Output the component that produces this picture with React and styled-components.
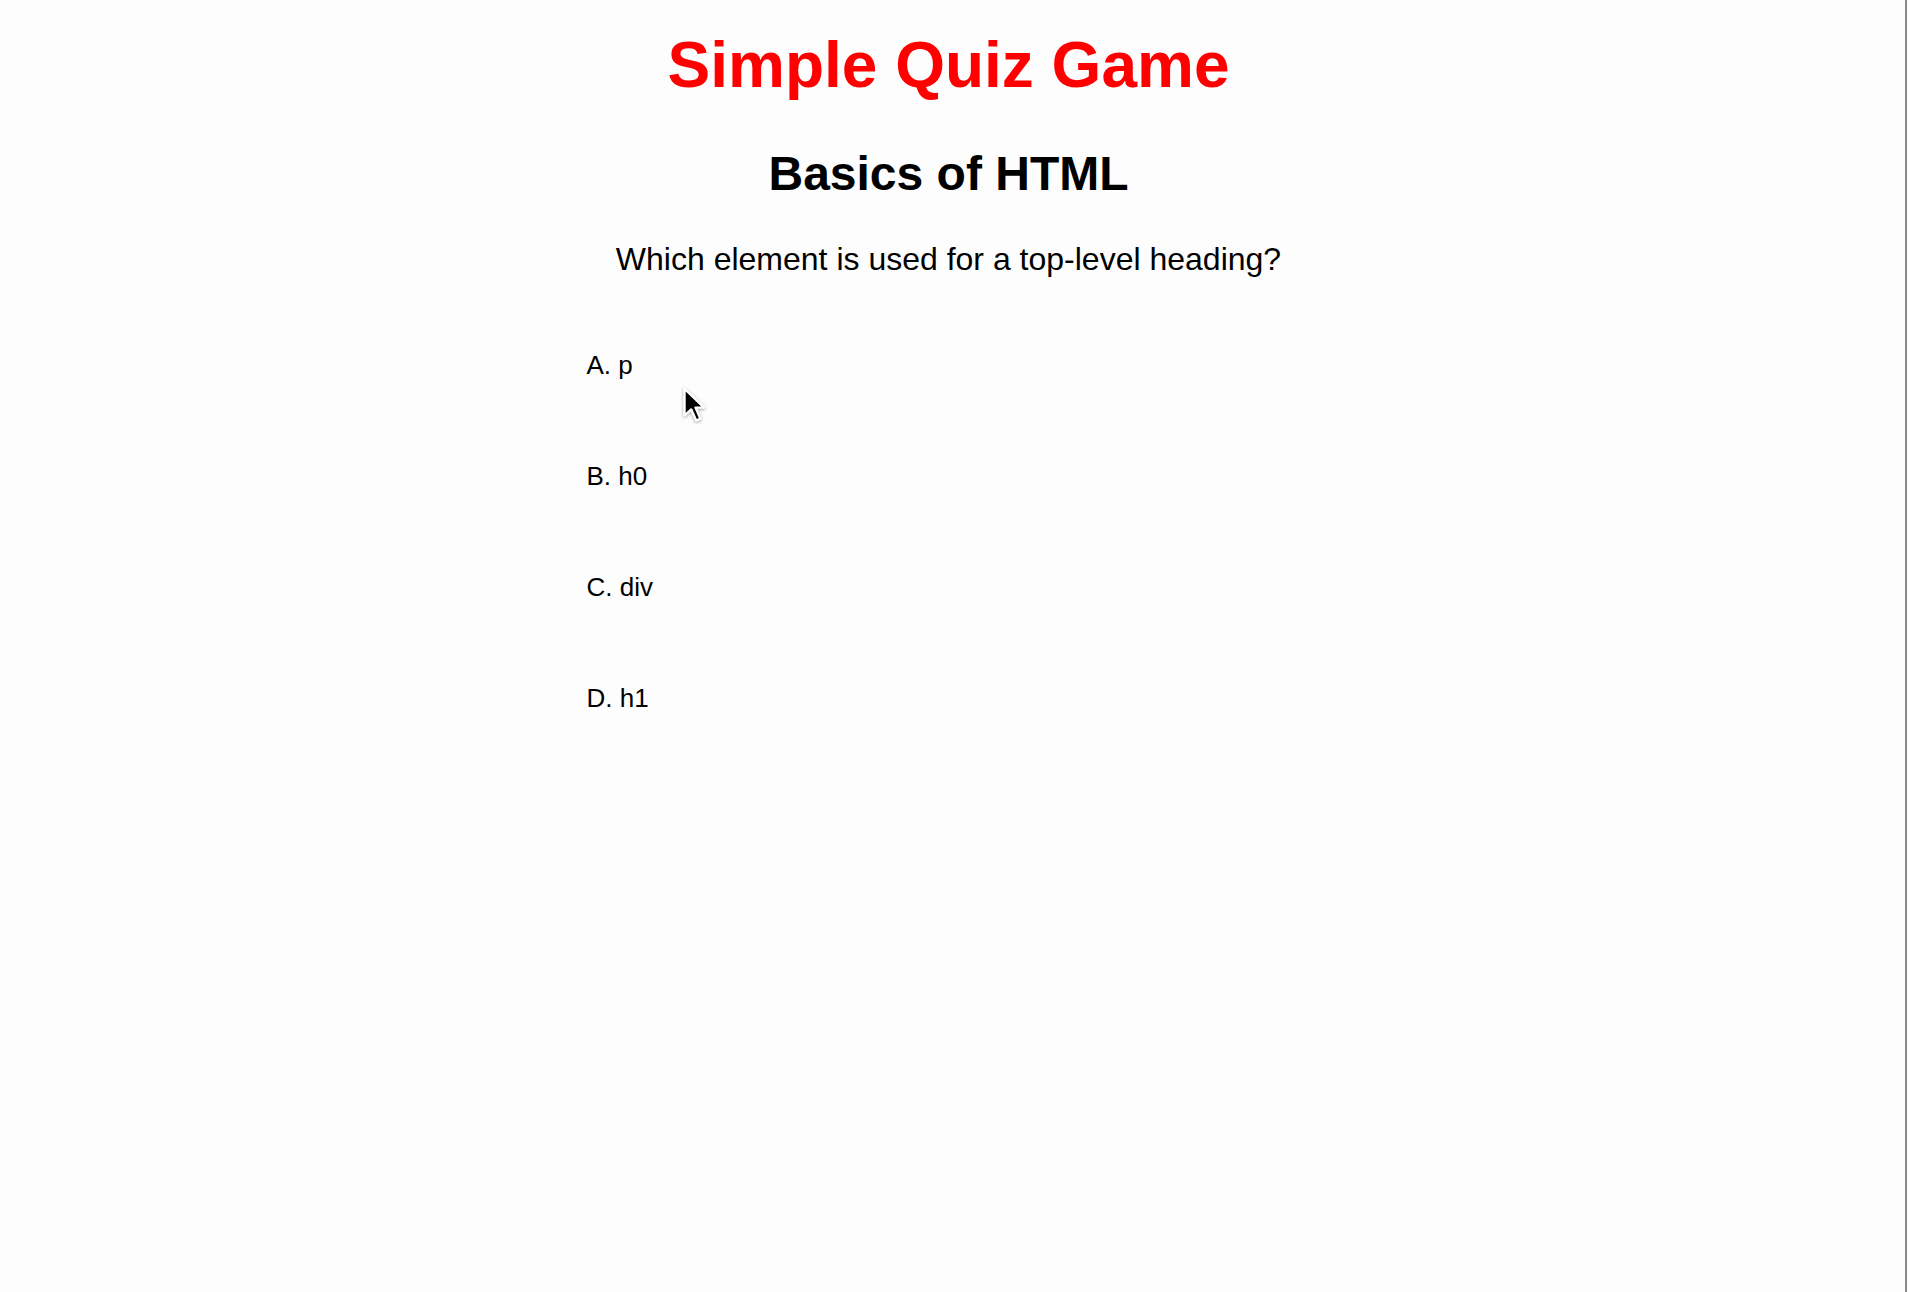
import React from 'react';
import styled, { createGlobalStyle } from 'styled-components';

const GlobalStyle = createGlobalStyle`
  html, body {
    margin: 0;
    padding: 0;
    background: #fdfdfd;
  }
  body {
    font-family: "Liberation Sans", Arial, Helvetica, sans-serif;
    color: #000;
  }
`;

const Page = styled.div`
  position: relative;
  min-height: 100vh;
  box-sizing: border-box;
  margin-right: 1px;
  padding: 33px 8px 0 0;
  border-right: 2px solid #8a8a8a;
  display: flex;
  flex-direction: column;
  align-items: center;
`;

const Title = styled.h1`
  margin: 0;
  font-size: 64px;
  line-height: 1;
  font-weight: 700;
  color: #ff0000;
`;

const QuizBox = styled.div`
  width: 724px;
  display: flex;
  flex-direction: column;
  align-items: center;
`;

const Topic = styled.h2`
  margin: 53px 0 0;
  font-size: 48px;
  line-height: 1;
  font-weight: 700;
`;

const Question = styled.p`
  margin: 45px 0 0;
  font-size: 32px;
  line-height: 1;
`;

const Options = styled.ul`
  list-style: none;
  align-self: stretch;
  margin: 77px 0 0;
  padding: 0;
  display: flex;
  flex-direction: column;
  gap: 85px;
`;

const Option = styled.li`
  font-size: 26px;
  line-height: 1;
  cursor: pointer;
`;

const Cursor = styled.svg`
  position: absolute;
  left: 682px;
  top: 386px;
  width: 32px;
  height: 42px;
  pointer-events: none;
  filter: drop-shadow(0 1px 1.5px rgba(0, 0, 0, 0.35));
`;

const options = ['A. p', 'B. h0', 'C. div', 'D. h1'];

function App() {
  return (
    <>
      <GlobalStyle />
      <Page>
        <Title>Simple Quiz Game</Title>
        <QuizBox>
          <Topic>Basics of HTML</Topic>
          <Question>Which element is used for a top-level heading?</Question>
          <Options>
            {options.map((o) => (
              <Option key={o}>{o}</Option>
            ))}
          </Options>
        </QuizBox>
        <Cursor viewBox="0 0 26 34">
          <path
            d="M2 2 L2 24 L7.5 19 L11.5 28 L15 26.5 L11 17.5 L18 17.5 Z"
            fill="#000"
            stroke="#fff"
            strokeWidth="2"
            strokeLinejoin="round"
          />
        </Cursor>
      </Page>
    </>
  );
}

export default App;
